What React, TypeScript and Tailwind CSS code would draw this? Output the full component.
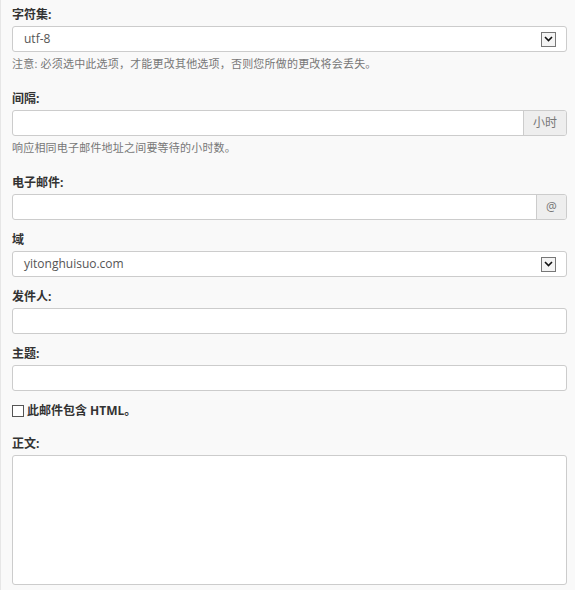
const font = { fontFamily: '"Open Sans", "Noto Sans CJK SC", sans-serif' };

function Label({ children }: { children: React.ReactNode }) {
  return <div className="h-4 leading-4 text-[12px] font-bold text-[#333] mb-[3px]">{children}</div>;
}

function Help({ children }: { children: React.ReactNode }) {
  return <div className="mt-[5px] leading-[14px] text-[11px] tracking-[0.2px] text-[#777]">{children}</div>;
}

function Select({ value }: { value: string }) {
  return (
    <div className="h-[26px] flex items-center justify-between bg-white border border-[#ccc] rounded-[3px] pl-[11px] pr-[10px]">
      <span className="text-[12px] text-[#555]">{value}</span>
      <span className="w-[15px] h-[15px] border border-[#777] bg-[#f4f4f4] flex items-center justify-center">
        <svg width="9" height="6" viewBox="0 0 9 6">
          <path d="M1 1l3.5 3.5L8 1" fill="none" stroke="#111" strokeWidth="1.6" />
        </svg>
      </span>
    </div>
  );
}

function Input() {
  return <div className="h-[26px] bg-white border border-[#ccc] rounded-[3px]" />;
}

function AddonInput({ addon, w }: { addon: string; w: string }) {
  return (
    <div className="h-[26px] flex bg-white border border-[#ccc] rounded-[3px] overflow-hidden">
      <div className="flex-1" />
      <div className={`${w} border-l border-[#ccc] bg-[#eee] flex items-center justify-center text-[12px] text-[#777]`}>
        {addon}
      </div>
    </div>
  );
}

export default function App() {
  return (
    <div style={font} className="min-h-[590px] bg-[#f9f9f9] border-l border-[#e6e6e6] pl-[11px] pr-[8px] pt-[7px]">
      <Label>字符集:</Label>
      <Select value="utf-8" />
      <Help>注意: 必须选中此选项，才能更改其他选项，否则您所做的更改将会丢失。</Help>

      <div className="mt-[20px]">
        <Label>间隔:</Label>
        <AddonInput addon="小时" w="w-[43px]" />
        <Help>响应相同电子邮件地址之间要等待的小时数。</Help>
      </div>

      <div className="mt-[20px]">
        <Label>电子邮件:</Label>
        <AddonInput addon="@" w="w-[30px]" />
      </div>

      <div className="mt-[12px]">
        <Label>域</Label>
        <Select value="yitonghuisuo.com" />
      </div>

      <div className="mt-[12px]">
        <Label>发件人:</Label>
        <Input />
      </div>

      <div className="mt-[12px]">
        <Label>主题:</Label>
        <Input />
      </div>

      <label className="mt-[12px] h-4 flex items-center gap-[3px] text-[12px] font-bold text-[#333]">
        <span className="w-[12px] h-[12px] border border-[#555] bg-white" />
        此邮件包含 HTML。
      </label>

      <div className="mt-[17px]">
        <Label>正文:</Label>
        <div className="h-[130px] bg-white border border-[#ccc] rounded-[3px]" />
      </div>
    </div>
  );
}
